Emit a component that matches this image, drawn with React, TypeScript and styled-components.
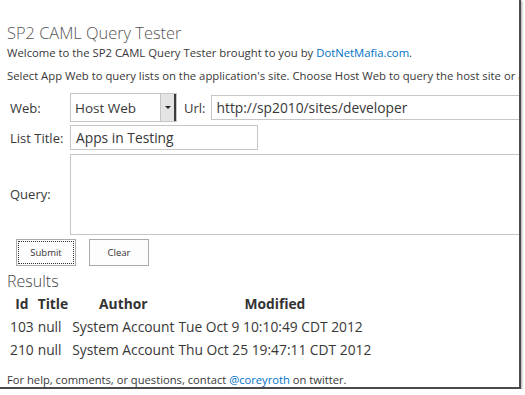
import styled, { createGlobalStyle } from "styled-components";

const GlobalStyle = createGlobalStyle`
  html, body {
    margin: 0;
    padding: 0;
    background: #ffffff;
  }
  body {
    font-family: "Open Sans", "Noto Sans", sans-serif;
    color: #383838;
  }
`;

const Frame = styled.div`
  width: 521px;
  height: 389px;
  box-sizing: border-box;
  border-right: 2px solid #4a4a4a;
  border-bottom: 2px solid #4a4a4a;
  box-shadow: 1px 1px 2px rgba(0, 0, 0, 0.35);
  overflow: hidden;
`;

const Page = styled.div`
  width: 640px;
  padding: 23px 0 0 7px;
`;

const Title = styled.h1`
  margin: 0;
  font-size: 16.4px;
  font-weight: 300;
  line-height: 20px;
  color: #555555;
`;

const Text = styled.p<{ $top: number }>`
  margin: ${(p) => p.$top}px 0 0;
  font-size: 11.3px;
  line-height: 16px;
  white-space: nowrap;
`;

const Link = styled.a`
  color: #0072c6;
  text-decoration: none;
`;

const Form = styled.div`
  display: grid;
  grid-template-columns: 62px 1fr;
  row-gap: 3px;
  padding-left: 1px;
  margin-top: 9px;
`;

const Label = styled.label`
  font-size: 13px;
  display: flex;
  align-items: center;
  padding-left: 2px;
`;

const Field = styled.div`
  display: flex;
  align-items: center;
  gap: 5px;
`;

const Select = styled.div`
  width: 107px;
  height: 29px;
  box-sizing: border-box;
  border: 1px solid #c6c6c6;
  display: flex;
  align-items: stretch;
  font-size: 13.5px;
`;

const SelectValue = styled.span`
  flex: 1;
  display: flex;
  align-items: center;
  padding-left: 4px;
`;

const SelectButton = styled.span`
  width: 13px;
  background: #e4e4e4;
  border-left: 1px solid #c6c6c6;
  border-right: 2px solid #3a3a3a;
  display: flex;
  align-items: center;
  justify-content: center;
`;

const Caret = styled.span`
  width: 0;
  height: 0;
  border-left: 3px solid transparent;
  border-right: 3px solid transparent;
  border-top: 3px solid #222;
`;

const Input = styled.div<{ $w?: number }>`
  ${(p) => (p.$w ? `width: ${p.$w}px;` : "flex: 1;")}
  height: 25px;
  box-sizing: border-box;
  border: 1px solid #c6c6c6;
  font-size: 13.8px;
  display: flex;
  align-items: center;
  padding-left: 5px;
  white-space: nowrap;
`;

const TextArea = styled.div`
  height: 81px;
  margin-top: 1px;
  box-sizing: border-box;
  border: 1px solid #c6c6c6;
  border-right: none;
`;

const Buttons = styled.div`
  display: flex;
  gap: 13px;
  padding-left: 9px;
  margin-top: 4px;
`;

const Button = styled.button<{ $focused?: boolean }>`
  width: 60px;
  height: 27px;
  background: #fdfdfd;
  border: 1px solid #ababab;
  font-family: "Open Sans", sans-serif;
  font-size: 9.5px;
  color: #333;
  padding: 0;
  outline: ${(p) => (p.$focused ? "1px dotted #333" : "none")};
  outline-offset: -3px;
`;

const Results = styled.h2`
  margin: 5px 0 0;
  font-size: 16px;
  font-weight: 300;
  line-height: 20px;
  color: #444;
`;

const Table = styled.table`
  border-collapse: separate;
  border-spacing: 2px 0;
  font-size: 13.8px;
`;

const Th = styled.th`
  font-weight: 700;
  padding: 0 1px;
  height: 24px;
  color: #333;
`;

const Td = styled.td`
  padding: 0 1px;
  height: 23px;
  white-space: nowrap;
`;

const Footer = styled.p`
  margin: 11px 0 0;
  font-size: 11.2px;
  line-height: 15px;
  white-space: nowrap;
`;

const rows = [
  { id: 103, title: "null", author: "System Account", modified: "Tue Oct 9 10:10:49 CDT 2012" },
  { id: 210, title: "null", author: "System Account", modified: "Thu Oct 25 19:47:11 CDT 2012" },
];

export default function App() {
  return (
    <>
      <GlobalStyle />
      <Frame>
        <Page>
          <Title>SP2 CAML Query Tester</Title>
          <Text $top={2}>
            Welcome to the SP2 CAML Query Tester brought to you by{" "}
            <Link href="#">DotNetMafia.com</Link>.
          </Text>
          <Text $top={7}>
            Select App Web to query lists on the application's site. Choose Host Web to query the host site or a
          </Text>
          <Form>
            <Label>Web:</Label>
            <Field>
              <Select>
                <SelectValue>Host Web</SelectValue>
                <SelectButton>
                  <Caret />
                </SelectButton>
              </Select>
              <Label>Url:</Label>
              <Input>http://sp2010/sites/developer</Input>
            </Field>
            <Label>List Title:</Label>
            <Field>
              <Input $w={188}>Apps in Testing</Input>
            </Field>
            <Label>Query:</Label>
            <TextArea />
          </Form>
          <Buttons>
            <Button $focused>Submit</Button>
            <Button>Clear</Button>
          </Buttons>
          <Results>Results</Results>
          <Table>
            <thead>
              <tr>
                <Th>Id</Th>
                <Th>Title</Th>
                <Th>Author</Th>
                <Th>Modified</Th>
              </tr>
            </thead>
            <tbody>
              {rows.map((r) => (
                <tr key={r.id}>
                  <Td>{r.id}</Td>
                  <Td>{r.title}</Td>
                  <Td>{r.author}</Td>
                  <Td>{r.modified}</Td>
                </tr>
              ))}
            </tbody>
          </Table>
          <Footer>
            For help, comments, or questions, contact <Link href="#">@coreyroth</Link> on twitter.
          </Footer>
        </Page>
      </Frame>
    </>
  );
}
